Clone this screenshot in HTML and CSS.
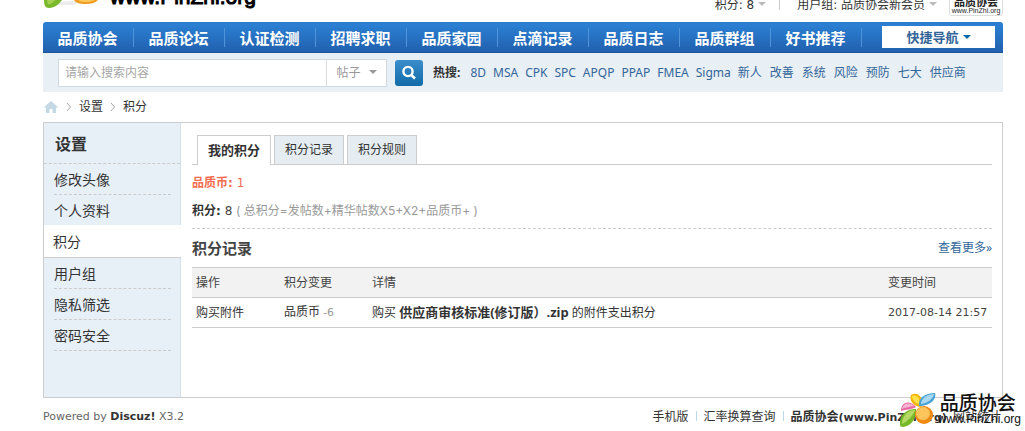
FILE: index.html
```html
<!DOCTYPE html>
<html lang="zh-CN">
<head>
<meta charset="utf-8">
<title>积分 - 品质协会</title>
<link rel="stylesheet" href="styles.css">
</head>
<body>
<div class="page">
  <header class="top">
    <a class="brand" href="#">
      <svg class="brand-mark" width="60" height="22" viewBox="0 0 60 22" aria-hidden="true">
        <path d="M12 2 L46 0 L30 5 L14 5Z" fill="#ececec"/>
        <path d="M1 0 H19 C16 4 12 8 6 8 C2 8 1 5 1 0Z" fill="#7ab82c"/>
        <path d="M4 0 H12 C10 3 7 5 5 4Z" fill="#a6d052"/>
        <path d="M31 0 H55 C52 3 48 4 43 4 C37 4 33 3 31 0Z" fill="#f29a1c"/>
        <path d="M35 0 H52 C46 3 39 3 35 0Z" fill="#fdc75a"/>
      </svg>
      <span class="brand-text">www.PinZhi.org</span>
    </a>
    <div class="account">
      <a class="drop" href="#">积分: 8</a>
      <span class="bar"></span>
      <a class="drop" href="#">用户组: 品质协会新会员</a>
      <a class="avatar" href="#"><b>品质协会</b><span>www.PinZhi.org</span></a>
    </div>
  </header>

  <nav class="nav">
    <a href="#">品质协会</a><a href="#">品质论坛</a><a href="#">认证检测</a><a href="#">招聘求职</a><a href="#">品质家园</a><a href="#">点滴记录</a><a href="#">品质日志</a><a href="#">品质群组</a><a href="#">好书推荐</a>
    <button class="quick" type="button">快捷导航</button>
  </nav>

  <form class="search">
    <div class="field">
      <input type="text" aria-label="搜索" placeholder="请输入搜索内容">
      <button class="kind" type="button">帖子</button>
    </div>
    <button class="go" type="button" aria-label="搜索">
      <svg width="16" height="16" viewBox="0 0 16 16" aria-hidden="true"><circle cx="7" cy="6.500" r="4.600" fill="none" stroke="#fff" stroke-width="2.400"/><path d="M10 9.800 L14 13.500" stroke="#fff" stroke-width="2.600"/></svg>
    </button>
    <div class="hot">
      <strong>热搜:</strong>
      <a href="#">8D</a><a href="#">MSA</a><a href="#">CPK</a><a href="#">SPC</a><a href="#">APQP</a><a href="#">PPAP</a><a href="#">FMEA</a><a href="#">Sigma</a>
      <div class="topics"><a href="#">新人</a><a href="#">改善</a><a href="#">系统</a><a href="#">风险</a><a href="#">预防</a><a href="#">七大</a><a href="#">供应商</a></div>
    </div>
  </form>

  <div class="crumbs">
    <a href="#" aria-label="首页"><svg width="16" height="12" viewBox="0 0 16 12" aria-hidden="true"><path d="M8 0 L15.500 6.500 H13 V12 H9.500 V8 H6.500 V12 H3 V6.500 H0.500Z" fill="#c5d8e5"/></svg></a>
    <svg width="6" height="10" viewBox="0 0 6 10" aria-hidden="true"><path d="M1 1 L4.500 5 L1 9" fill="none" stroke="#aaa"/></svg>
    <a href="#">设置</a>
    <svg width="6" height="10" viewBox="0 0 6 10" aria-hidden="true"><path d="M1 1 L4.500 5 L1 9" fill="none" stroke="#aaa"/></svg>
    <span>积分</span>
  </div>

  <div class="panel">
    <aside class="side">
      <h2>设置</h2>
      <ul>
        <li><a href="#">修改头像</a></li>
        <li><a href="#">个人资料</a></li>
        <li class="on"><a href="#">积分</a></li>
        <li><a href="#">用户组</a></li>
        <li><a href="#">隐私筛选</a></li>
        <li><a href="#">密码安全</a></li>
      </ul>
    </aside>
    <main class="main">
      <div class="tabs">
        <a class="on" href="#">我的积分</a><a href="#">积分记录</a><a href="#">积分规则</a>
      </div>
      <div class="credits">
        <p class="coin"><b>品质币:</b> 1</p>
        <p><b>积分:</b> 8 <span>( 总积分=发帖数+精华帖数X5+X2+品质币+ )</span></p>
      </div>
      <div class="head">
        <h3>积分记录</h3>
        <a href="#">查看更多»</a>
      </div>
      <table>
        <thead>
          <tr><th class="c1">操作</th><th class="c1">积分变更</th><th>详情</th><th class="c4">变更时间</th></tr>
        </thead>
        <tbody>
          <tr><td>购买附件</td><td>品质币 <span class="minus">-6</span></td><td>购买 <b>供应商审核标准(修订版）.zip</b> 的附件支出积分</td><td class="date">2017-08-14 21:57</td></tr>
        </tbody>
      </table>
    </main>
  </div>

  <footer class="foot">
    <p class="powered">Powered by <b>Discuz!</b> X3.2</p>
    <p class="links"><a href="#">手机版</a><i></i><a href="#">汇率换算查询</a><i></i><a href="#"><b>品质协会<span class="host">(www.PinZhi.org)</span></b> 网站统计</a></p>
  </footer>
</div>

<div class="mark">
  <svg width="38" height="36" viewBox="0 0 38 36" aria-hidden="true">
    <path d="M1 33 C0 23 7 17 17 17 C18 25 13 34 4 35 C2 35 1 34 1 33Z" fill="#76b82a"/>
    <path d="M3 32 C3 24 9 18 16 18 C14 24 9 29 3 32Z" fill="#b4d965"/>
    <path d="M2 19 C2 9 12 8 17 15 C13 18 7 17 2 19Z" fill="#e9679f"/>
    <path d="M3 17 C4 11 11 10 15 14 C11 15 7 15 3 17Z" fill="#f5b4d0"/>
    <path d="M12 3 C18 -1 25 5 22 15 C14 14 10 8 12 3Z" fill="#f9b400"/>
    <path d="M13 4 C18 2 22 7 20 12 C16 11 13 8 13 4Z" fill="#fde04a"/>
    <path d="M20 14 C19 6 26 1 36 1 C38 8 30 14 20 14Z" fill="#49a3d5"/>
    <path d="M22 12 C22 6 29 2 35 2 C34 7 29 11 22 12Z" fill="#a9d9f2"/>
    <ellipse cx="25" cy="23" rx="9" ry="9" fill="#f08a12"/>
    <ellipse cx="24" cy="21.500" rx="7" ry="6.500" fill="#fdc45c"/>
  </svg>
  <div class="mark-text"><b>品质协会</b><span>www.PinZhi.org</span></div>
</div>
</body>
</html>
```
FILE: styles.css
```css
* { box-sizing: border-box; }
body {
  margin: 0;
  position: relative;
  background: #fff;
  color: #444;
  font: 12px/16px "Noto Sans", "Noto Sans CJK SC", sans-serif;
  overflow-x: hidden;
}
a { color: inherit; text-decoration: none; }
h2, h3, p, ul { margin: 0; padding: 0; }
ul { list-style: none; }
button, input { font: inherit; }
.page { margin: 0 22px 0 43px; }

/* header */
.top {
  display: flex;
  justify-content: space-between;
  align-items: flex-end;
  height: 22px;
  overflow: hidden;
  color: #333;
}
.brand { display: flex; align-items: flex-end; gap: 7px; }
.brand-text {
  color: #000;
  font: 21px/24px "Liberation Sans", sans-serif;
  -webkit-text-stroke: 1px #000;
  padding-bottom: 13px;
}
.account {
  display: flex;
  align-items: flex-end;
  padding-bottom: 6px;
  font-family: "DejaVu Sans", "Noto Sans CJK SC", sans-serif;
}
.drop { padding-bottom: 3px; white-space: nowrap; }
.drop::after, .kind::after, .quick::after {
  content: "";
  display: inline-block;
  border: 4px solid transparent;
  border-top-color: #bbb;
  border-bottom: 0;
  margin-left: 4px;
  vertical-align: 3px;
}
.bar { width: 1px; height: 16px; margin: 0 17px 6px 13px; background: #ccc; }
.avatar {
  display: flex;
  flex-direction: column;
  align-items: center;
  width: 54px;
  margin-left: 12px;
  border: 1px solid #ddd;
  border-radius: 3px;
  color: #222;
  font: 7px/8px "Liberation Sans", sans-serif;
}
.avatar b { font: bold 11px/11px "Noto Sans CJK SC", sans-serif; }

/* navigation */
.nav {
  display: flex;
  height: 31px;
  background: linear-gradient(#2b7acd, #2b7fd2 10%, #2160ae);
  border-bottom: 1px solid #1d5596;
  border-radius: 3px 3px 0 0;
}
.nav a {
  width: 91px;
  padding-right: 2px;
  color: #fff;
  font: bold 15px/31px "Noto Sans CJK SC", sans-serif;
  text-align: center;
  background: linear-gradient(#4f93da, #4f93da) right 6px / 1px 19px no-repeat;
}
.quick {
  width: 113px;
  height: 22px;
  margin: 4px 8px 0 auto;
  padding: 0;
  border: 0;
  background: #fff;
  color: #336699;
  font: bold 13px/22px "Noto Sans CJK SC", sans-serif;
}
.quick::after { border-top-color: #06a; }

/* search */
.search {
  display: flex;
  align-items: center;
  height: 39px;
  padding: 0 15px;
  background: #e8eff5;
}
.field {
  display: flex;
  width: 329px;
  height: 28px;
  border: 1px solid #ced9e2;
  background: #fff;
}
.field input {
  flex: 1;
  min-width: 0;
  padding: 0 6px;
  border: 0;
  background: none;
}
.field input::placeholder { color: #a6a6a6; }
.kind {
  width: 60px;
  padding: 0;
  border: 0;
  border-left: 1px solid #ddd;
  background: none;
  color: #999;
}
.kind::after { border-top-color: #999; margin-left: 8px; }
.go {
  display: flex;
  align-items: center;
  justify-content: center;
  width: 28px;
  height: 26px;
  margin: 0 10px 0 8px;
  padding: 0;
  border: 0;
  border-radius: 3px;
  background: linear-gradient(#3b8dcb, #106ba8);
}
.hot { display: flex; gap: 7px; color: #336699; white-space: nowrap; }
.hot strong { margin-right: 3px; color: #333; }
.topics { display: flex; gap: 8px; }

/* breadcrumb */
.crumbs {
  display: flex;
  align-items: center;
  gap: 7px;
  height: 30px;
  color: #333;
}
.crumbs a { display: flex; }

/* content */
.panel { display: flex; min-height: 276px; border: 1px solid #ccc; }
.side {
  width: 137px;
  background: #e7eff7;
  border-right: 1px solid #d5dfe8;
  color: #333;
}
.side h2 {
  padding: 0 11px;
  font: bold 16px/40px "Noto Sans CJK SC", sans-serif;
  border-bottom: 1px dashed #ccc;
}
.side li {
  margin: 0 9px 0 10px;
  border-bottom: 1px dashed #ccc;
  font: 14px/30px "Noto Sans CJK SC", sans-serif;
}
.side .on {
  margin: -1px -1px 0 0;
  padding-left: 9px;
  background: #fff;
  border-bottom: 1px solid #ccc;
  line-height: 32px;
}
.main { flex: 1; min-width: 0; padding: 12px 10px 20px 11px; }
.tabs {
  display: flex;
  gap: 3px;
  padding-left: 5px;
  border-bottom: 1px solid #ccc;
}
.tabs a {
  padding: 0 10px;
  border: 1px solid #ccc;
  border-bottom: 0;
  background: #e5edf2;
  color: #333;
  line-height: 28px;
}
.tabs .on {
  margin-bottom: -1px;
  background: #fff;
  font-size: 13px;
  font-weight: bold;
}
.credits {
  padding: 4px 0 3px;
  border-bottom: 1px dashed #ccc;
  font-family: "DejaVu Sans", "Noto Sans CJK SC", sans-serif;
  line-height: 28px;
}
.credits b { color: #333; }
.credits span { color: #999; font-family: Inter, "Noto Sans CJK SC", sans-serif; }
.credits .coin, .coin b { color: #f26c4f; }
.head { display: flex; justify-content: space-between; align-items: center; height: 38px; }
.head h3 { font: bold 15px/20px "Noto Sans CJK SC", sans-serif; }
.head a { color: #336699; }
table { width: 100%; border-collapse: collapse; table-layout: fixed; }
th, td {
  height: 30px;
  padding: 0 4px;
  border: solid #ccc;
  border-width: 1px 0;
  text-align: left;
  font-weight: normal;
  white-space: nowrap;
}
th { background: #f2f2f2; }
td { color: #333; }
td b { font-size: 13px; }
.c1 { width: 88px; }
.c4 { width: 108px; }
.minus { color: #999; font: 11px/16px "DejaVu Sans", sans-serif; }
.date { color: #444; font: 11px/16px "DejaVu Sans", sans-serif; }

/* footer */
.foot { display: flex; justify-content: space-between; padding: 11px 0 5px; white-space: nowrap; }
.powered { color: #666; font: 11px/16px "DejaVu Sans", sans-serif; }
.powered b, .links { color: #333; }
.links { padding-right: 2px; }
.links b { margin-right: 3px; }
.host { font: bold 11px/16px "DejaVu Sans", sans-serif; }
.links i {
  display: inline-block;
  width: 1px;
  height: 10px;
  margin: 0 7px;
  background: #b8dce8;
}

/* watermark over the page corner */
.mark { position: absolute; right: 4px; top: 392px; display: flex; gap: 1px; color: #111; }
.mark-text { display: flex; flex-direction: column; }
.mark-text b { font: 500 19px/20px "Noto Sans CJK SC", sans-serif; padding-left: 2px; }
.mark-text span { font: 12px/14px "Liberation Sans", sans-serif; }
```
